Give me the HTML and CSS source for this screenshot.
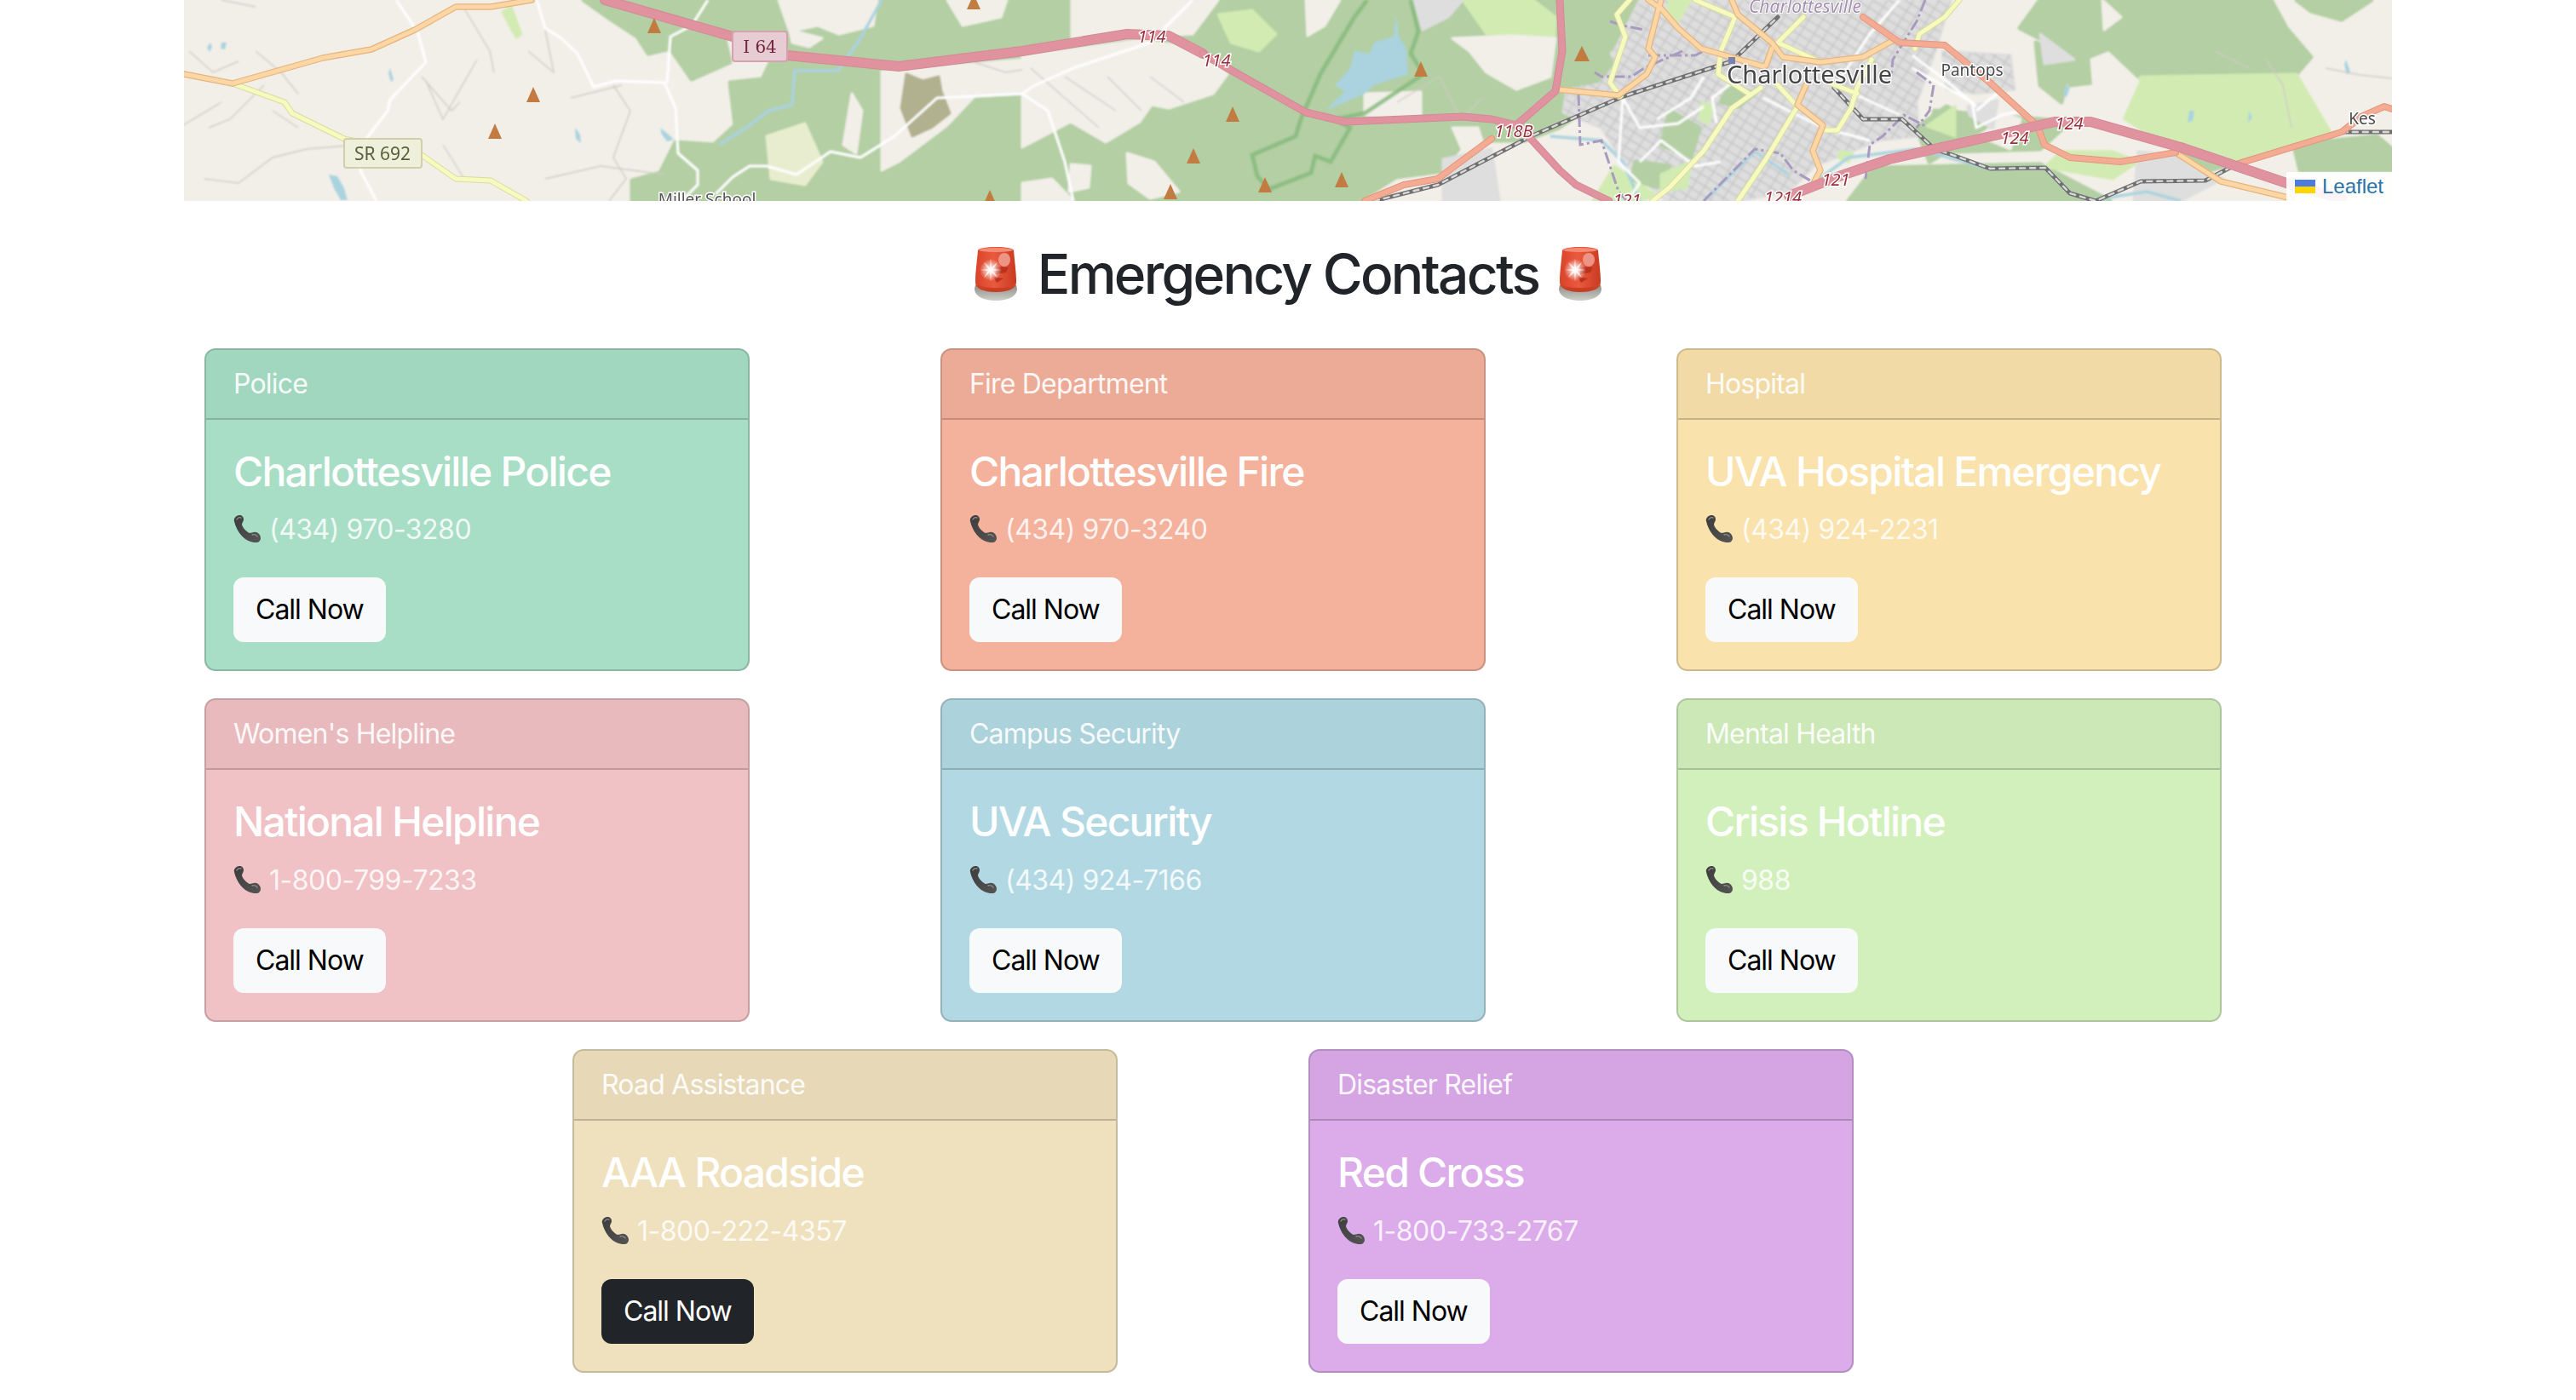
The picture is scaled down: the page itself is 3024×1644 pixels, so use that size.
FILE: index.html
```html
<!DOCTYPE html>
<html lang="en">
<head>
<meta charset="utf-8">
<title>Emergency Contacts</title>
<link rel="stylesheet" href="styles.css">
</head>
<body>
<svg class="defs" aria-hidden="true">
  <defs>
    <linearGradient id="dome" x1="0" x2="1" y1="0" y2="0">
      <stop offset="0" stop-color="#d9432a"/><stop offset=".45" stop-color="#ea5a3e"/><stop offset="1" stop-color="#c93a22"/>
    </linearGradient>
    <linearGradient id="rim" x1="0" x2="0" y1="0" y2="1">
      <stop offset="0" stop-color="#e04e30"/><stop offset="1" stop-color="#c23a20"/>
    </linearGradient>
    <linearGradient id="base" x1="0" x2="0" y1="0" y2="1">
      <stop offset="0" stop-color="#8f8f8a"/><stop offset="1" stop-color="#cfcfc9"/>
    </linearGradient>
    <radialGradient id="flash">
      <stop offset="0" stop-color="#fff"/><stop offset=".35" stop-color="#fff" stop-opacity=".7"/><stop offset="1" stop-color="#fff" stop-opacity="0"/>
    </radialGradient>
    <linearGradient id="handset" x1="0" x2="1" y1="0" y2="1">
      <stop offset="0" stop-color="#3c3c3c"/><stop offset="1" stop-color="#555"/>
    </linearGradient>
    <symbol id="siren" viewBox="0 0 54 64">
      <path class="siren-base" d="M2 49c0 9 11 14 25 14s25-5 25-14l-1-4H3z"/>
      <path class="siren-rim" d="M3 42c0 7 10 11 24 11s24-4 24-11v-5H3z"/>
      <path class="siren-dome" d="M6 4c0-2 9-4 21-4s21 2 21 4c1 12 3 26 3 36 0 5-11 8-24 8S3 45 3 40C3 30 5 16 6 4z"/>
      <ellipse class="siren-top" cx="27" cy="3.5" rx="20" ry="2.5"/>
      <ellipse class="siren-shine" cx="37" cy="15" rx="7" ry="8"/>
      <path class="siren-dark" d="M27 23l15 1-3 6-12 2zM24 35l12 2-8 5z"/>
      <circle class="siren-glow" cx="21" cy="27" r="13"/>
      <path class="siren-star" d="M21 13l1 11 7-6-5 8 9 1-9 1 5 8-7-6-1 11-1-11-7 6 5-8-9-1 9-1-5-8 7 6z"/>
    </symbol>
    <symbol id="phone" viewBox="0 0 32 32">
      <path class="phone-body" d="M1 7C0 4 3 0 7 0c3 0 5 2 5 5 0 2-2 4-2 6 1 4 5 8 9 10 2 0 3-1 5-1 4-1 8 3 8 7 0 2-2 5-4 5-3 0-5 0-8-1C12 29 3 18 1 7z"/>
      <path class="phone-shine" d="M4 5c1-2 3-3 5-2M22 23c2-1 5 0 6 2"/>
    </symbol>
  </defs>
</svg>

<section class="map">
  <svg class="map-canvas" viewBox="216 0 2592 236" preserveAspectRatio="none" role="img" aria-label="Map of Charlottesville">
    <defs>
      <pattern id="streets" width="26" height="20" patternUnits="userSpaceOnUse" patternTransform="rotate(32)">
        <path class="street-fine" d="M0 5H26M0 15H26M7 0V20M19 0V20"/>
      </pattern>
      <filter id="soft" x="0" y="0" width="100%" height="100%"><feGaussianBlur stdDeviation="1"/></filter>
      <filter id="softer" x="0" y="0" width="100%" height="100%"><feGaussianBlur stdDeviation="0.5"/></filter>
      <g id="rail-lines">
        <path d="M1613 236L1688 217 1797 160 1906 113 2033 72 2087 20"/>
        <path d="M2153 103L2187 140 2233 140 2271 175 2295 183 2336 198 2401 197 2430 227 2460 236 2513 213 2589 212 2631 190 2749 155 2808 155"/>
      </g>
      <g id="tert-lines">
        <path d="M273 98L334 120 343 133 404 163 495 182 535 210 576 212 618 236"/>
        <path d="M1913 0L1898 17 1908 43 1890 97 1902 113"/>
        <path d="M1990 0L2037 20 2020 60 2017 87 2053 110"/>
        <path d="M2067 103L2033 127 2000 177 1960 220 1940 236"/>
        <path d="M2117 20L2087 50 2137 73"/>
        <path d="M2087 100L2110 125 2073 187 2040 236"/>
        <path d="M2197 70L2180 103 2173 127 2157 153 2143 153M2147 97L2180 110"/>
        <path d="M2300 0L2283 20 2253 40 2248 57"/>
      </g>
      <g id="sec-lines">
        <path d="M216 87L273 98 379 68 436 58 487 35 535 8 576 8 624 0"/>
        <path d="M1827 105L1900 112 1933 87 1943 67 1935 57 1947 10 1950 0"/>
        <path d="M1935 0L1950 10 1970 33 1997 57 2070 78"/>
        <path d="M2033 0L2040 17 2080 50 2093 67 2137 73 2187 67 2223 47"/>
        <path d="M2080 57L2073 77"/>
        <path d="M2120 100L2110 123 2140 147 2128 177 2137 200 2130 213"/>
        <path d="M2554 179L2607 213 2690 233"/>
      </g>
      <g id="trunk-lines">
        <path d="M1751 163L1705 197 1688 210 1648 217 1602 236"/>
        <path d="M2187 20L2230 50 2283 53 2336 97 2392 148 2400 170 2430 185 2489 190 2554 179"/>
        <path d="M2628 192L2749 155 2772 137 2799 125 2808 128"/>
      </g>
      <g id="mw-wide">
        <path d="M710 0L860 43M924 65L1055 78 1200 60 1323 40 1372 42 1412 63"/>
        <path d="M2100 230L2159 207 2218 187 2412 143 2454 143 2560 173 2690 217 2749 233"/>
      </g>
      <g id="mw-thin">
        <path d="M1412 63L1441 80 1533 132 1579 143 1717 137 1751 140 1780 147 1826 107 1834 60 1831 0"/>
        <path d="M1780 147L1797 163 1831 200 1850 217 1889 236"/>
      </g>
    </defs>
    <rect class="land" x="216" y="0" width="2592" height="236"/>
    <g filter="url(#soft)">
      <g class="forest">
        <path d="M685 0L716 22 748 43 761 63 787 57 812 93 857 73 850 43 870 5 905 15 935 0z"/>
        <path d="M742 236V212L775 203 793 167 838 170 863 147 857 97 895 93 906 70 870 60 855 30 870 5 905 15 935 0H1935L1905 100 1830 150 1790 165 1720 165 1688 205 1640 236z"/>
        <path d="M2395 0H2666L2684 33 2713 67 2696 87 2666 100 2601 113 2513 90 2430 100 2424 60 2371 33z"/>
        <path d="M2696 0H2784L2749 23 2713 13z"/>
        <path d="M2200 197L2395 193 2477 236H2170z"/>
        <path d="M2271 130L2430 143 2395 175 2290 178 2260 165zM2390 50L2430 70 2420 120 2395 100z"/>
        <path d="M2560 176L2600 160 2630 190 2575 205zM2690 160L2740 165 2790 160 2808 175V200L2700 200z"/>
      </g>
      <g class="meadow">
        <path d="M2513 90L2696 87 2737 157 2625 190 2548 173 2483 133z"/>
        <path d="M2400 196L2480 210 2510 190 2480 178 2420 178z"/>
        <path d="M1430 17L1470 12 1498 40 1478 60 1445 50zM1717 0H1800L1826 20 1825 43 1745 40z"/>
        <path d="M590 14L606 44 612 40 600 8z"/>
        <path d="M1895 195L1945 230 1925 236H1870z"/>
      </g>
      <path class="pale" d="M900 160L945 145 965 190 945 217 905 210z"/>
      <g class="clear">
        <path d="M914 0H1030L1025 30 985 40 960 30 927 37z"/>
        <path d="M927 35L965 45 950 55 930 50zM1112 0H1182L1175 20 1130 30z"/>
        <path d="M1035 84L1200 70V110L1144 113 1112 147 1055 190 1035 200z"/>
        <path d="M1000 110L1012 130 1005 180 990 170z"/>
        <path d="M1200 66L1338 47 1395 55 1441 87 1424 110 1372 127 1352 123 1338 143 1298 167 1257 143 1200 173z"/>
        <path d="M1258 0H1430L1400 40 1345 42 1258 50z"/>
        <path d="M1533 0H1573L1555 30 1535 42z"/>
        <path d="M1323 180L1355 190 1384 225 1350 233 1325 215zM1257 193L1280 195 1278 220 1255 225zM1200 215L1235 210 1260 236H1200z"/>
        <path d="M1602 110L1668 108V140L1602 135zM1705 45L1775 42 1826 45 1820 90 1780 105 1745 85 1725 60zM1705 150L1735 150 1751 200 1725 195z"/>
        <path d="M1602 236L1640 212 1694 205 1700 236z"/>
        <path d="M2455 70L2475 62 2510 95 2490 140 2460 130zM2300 150L2340 130 2372 140 2360 175z"/>
        <path d="M2468 0L2490 20 2470 35z"/>
      </g>
      <path class="urban" d="M1660 0H1717L1700 20 1670 35z"/>
      <path class="urban" d="M1850 88L1895 60 1925 0H2290L2272 60 2250 120 2252 160 2205 165 2130 195 2100 225 2040 236H1955L1905 190 1880 150 1835 132 1840 100z"/>
      <path class="urban-streets" d="M1850 88L1895 60 1925 0H2290L2272 60 2250 120 2252 160 2205 165 2130 195 2100 225 2040 236H1955L1905 190 1880 150 1835 132 1840 100z"/>
      <path class="urban" d="M1694 187L1751 175 1760 236H1694zM2510 178L2550 182 2610 210 2560 236H2505z"/>
      <path class="urban" d="M2280 60L2360 65 2365 105 2320 110 2285 105zM2395 40L2435 70 2400 75z"/>
      <path class="urban-streets" d="M2280 60L2360 65 2365 105 2320 110 2285 105z"/>
      <path class="urban" d="M2310 125L2345 118 2340 150 2315 150z"/>
      <g class="forest">
        <path d="M1837 0H1890L1880 45 1892 75 1875 95 1837 102z"/>
        <path d="M1960 130L1995 150 1985 185 1950 170zM1920 190L1960 195 1945 220 1915 210zM2030 100L2060 110 2040 125 2020 120z"/>
        <path d="M2285 125L2330 150 2265 190 2250 150z"/>
      </g>
      <g class="meadow">
        <path d="M1998 120L2012 125 2005 145 1995 140zM1950 205L1985 190 1980 220 1950 225zM2160 177L2175 180 2170 190 2158 185zM2262 148L2295 125 2295 160zM1960 0L1985 0 1970 25 1955 20z"/>
      </g>
      <path class="scrub" d="M1064 87L1083 95 1102 90 1105 107 1115 133 1093 150 1071 160 1058 127z"/>
      <path class="water" d="M1639 18L1636 43 1613 50 1608 63 1590 60 1585 80 1567 100 1579 107 1556 130 1602 110 1613 100 1653 87 1651 57 1642 43z"/>
      <path class="water" d="M386 205l10 2 8 14 4 14-8 0-8-14zM675 150l6 8 1 10-6-5zM775 150l10 8 6 6-8 2-6-8zM260 50l6 0-2 8-5-1zM247 50l-4 6 3 5 3-6zM458 80l4 14-3 2-3-10zM2425 100l5 2-4 12-4-2zM2570 130l6 0-2 12-6 2zM2640 130l4 8-5 6zM2754 70l5 14-4 4-3-12z"/>
      <path class="river" d="M844 170L876 150 902 130 930 123 933 83 984 83 1010 45 1035 0"/>
      <path class="river" d="M1820 160L1880 165 1905 190 1925 236M2000 236L2060 178 2100 205M2100 236L2170 185 2250 175 2336 198 2401 197 2430 227M2450 236L2520 225 2560 236"/>
      <path class="park" d="M1605 0L1590 20 1550 87 1527 140 1521 160 1470 182 1476 207 1490 222 1539 203 1544 183 1562 190 1585 150 1567 140 1602 133 1671 87 1656 63 1665 37 1656 0"/>
      <g class="minor">
        <path d="M222 60L250 85 280 72M260 0L300 8M300 60L330 85 350 110M310 100L270 140 245 150M240 210L280 215 320 185 360 175 420 170M350 150L320 130M495 90L530 130 540 120M500 95L520 140 560 70M545 10L575 60 580 85M620 60L650 85 640 35M670 115L730 100M720 100L740 130 720 185 735 210 715 236M520 170L545 210M640 210L705 195 780 205M210 150L260 120M1135 70L1180 85 1200 82M1210 80L1290 150M1250 90L1310 130M1300 90L1340 130M1350 90L1390 120"/>
        <path d="M1640 120L1690 90 1715 140 1740 115M2660 70L2680 100 2690 150M2730 80L2770 88 2808 92M2600 60L2640 80"/>
      </g>
      <g class="track">
        <path d="M465 0L490 37 500 73 458 117 455 130 430 163 423 200 442 236"/>
        <path d="M630 0L640 33 659 45 678 63 697 102 723 95 780 97 793 127 796 180 819 200 819 217 800 236"/>
        <path d="M831 0L812 30 787 43 783 97"/>
        <path d="M840 228L860 208 880 195 900 195 935 205 975 178 1010 185 1050 160 1100 115 1145 113 1200 110 1215 100 1260 80 1350 50 1400 0"/>
        <path d="M1200 110L1230 130 1250 190 1260 236"/>
        <path d="M2230 0L2195 40 2155 100 2230 135M2070 115L2140 150 2195 165M2000 125L1970 145 1925 150 1905 115 1900 190 1925 215 1910 236M2000 90L1985 115 1945 140M2040 92L2010 115 2015 145M2245 80L2315 120 2320 150 2350 135 2375 130"/>
        <path d="M2245 65L2285 95 2320 125M2350 105L2320 130"/>
        <path d="M1925 190L1950 165 1990 195 2020 190"/>
      </g>
    </g>
    <g filter="url(#softer)">
      <path class="boundary" d="M1890 25L1905 30 1930 35M1935 65L1990 65 2000 60M1975 60L1930 80 1915 90 1880 90 1872 85M1853 110L1855 170 1880 165 1900 225 1910 236M2000 236L2060 175 2090 180 2105 200 2130 215M2190 210L2195 170 2210 160 2235 135 2260 148M2250 85L2270 100 2265 130 2250 150M2260 0L2250 25 2222 70 2220 90"/>
      <use href="#rail-lines" class="rail-case"/>
      <use href="#rail-lines" class="rail-dash"/>
      <use href="#tert-lines" class="yellow-case"/>
      <use href="#tert-lines" class="yellow"/>
      <use href="#sec-lines" class="orange-case"/>
      <use href="#sec-lines" class="orange"/>
      <use href="#trunk-lines" class="salmon-case"/>
      <use href="#trunk-lines" class="salmon"/>
      <use href="#mw-wide" class="mw-case mw-w"/>
      <use href="#mw-wide" class="mw mw-w"/>
      <use href="#mw-thin" class="mw-case"/>
      <use href="#mw-thin" class="mw"/>
      <g class="peaks">
        <path d="M626 102l8 18h-16zM581 145l8 18h-16zM768 21l8 18h-16zM1143-7l8 18h-16zM1162 223l8 18h-16zM1857 54l9 18h-18zM1668 72l8 18h-16zM1447 125l8 18h-16zM1401 174l8 18h-16zM1485 208l8 18h-16zM1575 202l8 18h-16zM1374 216l8 18h-16z"/>
      </g>
      <rect class="station" x="2029" y="67" width="8" height="8"/>
      <rect class="shield-red" x="860" y="37" width="64" height="35" rx="3"/>
      <text class="shield-text" x="892" y="62">I 64</text>
      <rect class="shield-yellow" x="404" y="163" width="91" height="34" rx="3"/>
      <text class="shield-y-text" x="449" y="188">SR 692</text>
      <text class="ref" x="1352" y="50">114</text>
      <text class="ref" x="1428" y="78">114</text>
      <text class="ref" x="1777" y="161">118B</text>
      <text class="ref" x="2429" y="152">124</text>
      <text class="ref" x="2365" y="169">124</text>
      <text class="ref" x="2155" y="218">121</text>
      <text class="ref" x="2093" y="239">1214</text>
      <text class="ref" x="1910" y="242">121</text>
      <text class="place-county" x="2119" y="15">Charlottesville</text>
      <text class="place-city" x="2124" y="98">Charlottesville</text>
      <text class="place-small" x="2315" y="89">Pantops</text>
      <text class="place-small" x="2773" y="146" text-anchor="start">Kes</text>
      <text class="place-tiny" x="830" y="241">Miller School</text>
    </g>
  </svg>
  <div class="attribution">
    <svg class="flag" viewBox="0 0 24 16" aria-hidden="true"><rect class="flag-blue" width="24" height="8"/><rect class="flag-yellow" y="8" width="24" height="8"/></svg>
    <a class="attribution-link">Leaflet</a>
  </div>
</section>

<main class="container">
  <h2 class="page-title">
    <svg class="siren-icon" aria-hidden="true"><use href="#siren"/></svg>
    <span>Emergency Contacts</span>
    <svg class="siren-icon" aria-hidden="true"><use href="#siren"/></svg>
  </h2>

  <div class="row">
    <div class="col"><article class="card card-green">
      <header class="card-header">Police</header>
      <div class="card-body">
        <h4 class="card-title">Charlottesville Police</h4>
        <p class="card-text"><svg class="phone-icon" aria-hidden="true"><use href="#phone"/></svg>(434) 970-3280</p>
        <a class="btn btn-light">Call Now</a>
      </div>
    </article></div>
    <div class="col"><article class="card card-salmon">
      <header class="card-header">Fire Department</header>
      <div class="card-body">
        <h4 class="card-title">Charlottesville Fire</h4>
        <p class="card-text"><svg class="phone-icon" aria-hidden="true"><use href="#phone"/></svg>(434) 970-3240</p>
        <a class="btn btn-light">Call Now</a>
      </div>
    </article></div>
    <div class="col"><article class="card card-yellow">
      <header class="card-header">Hospital</header>
      <div class="card-body">
        <h4 class="card-title">UVA Hospital Emergency</h4>
        <p class="card-text"><svg class="phone-icon" aria-hidden="true"><use href="#phone"/></svg>(434) 924-2231</p>
        <a class="btn btn-light">Call Now</a>
      </div>
    </article></div>
    <div class="col"><article class="card card-pink">
      <header class="card-header">Women's Helpline</header>
      <div class="card-body">
        <h4 class="card-title">National Helpline</h4>
        <p class="card-text"><svg class="phone-icon" aria-hidden="true"><use href="#phone"/></svg>1-800-799-7233</p>
        <a class="btn btn-light">Call Now</a>
      </div>
    </article></div>
    <div class="col"><article class="card card-blue">
      <header class="card-header">Campus Security</header>
      <div class="card-body">
        <h4 class="card-title">UVA Security</h4>
        <p class="card-text"><svg class="phone-icon" aria-hidden="true"><use href="#phone"/></svg>(434) 924-7166</p>
        <a class="btn btn-light">Call Now</a>
      </div>
    </article></div>
    <div class="col"><article class="card card-lime">
      <header class="card-header">Mental Health</header>
      <div class="card-body">
        <h4 class="card-title">Crisis Hotline</h4>
        <p class="card-text"><svg class="phone-icon" aria-hidden="true"><use href="#phone"/></svg>988</p>
        <a class="btn btn-light">Call Now</a>
      </div>
    </article></div>
    <div class="col"><article class="card card-sand">
      <header class="card-header">Road Assistance</header>
      <div class="card-body">
        <h4 class="card-title">AAA Roadside</h4>
        <p class="card-text"><svg class="phone-icon" aria-hidden="true"><use href="#phone"/></svg>1-800-222-4357</p>
        <a class="btn btn-dark">Call Now</a>
      </div>
    </article></div>
    <div class="col"><article class="card card-purple">
      <header class="card-header">Disaster Relief</header>
      <div class="card-body">
        <h4 class="card-title">Red Cross</h4>
        <p class="card-text"><svg class="phone-icon" aria-hidden="true"><use href="#phone"/></svg>1-800-733-2767</p>
        <a class="btn btn-light">Call Now</a>
      </div>
    </article></div>
  </div>
</main>
</body>
</html>
```
FILE: styles.css
```css
* { box-sizing: border-box; }
html { overflow: hidden; }
html, body { margin: 0; background: #fff; }
body {
  font-family: Inter, "Liberation Sans", sans-serif;
  font-size: 32px;
  line-height: 1.5;
  color: #212529;
}
.defs { position: absolute; width: 0; height: 0; }

/* map */
.map { position: relative; width: 2592px; height: 236px; margin: 0 auto; overflow: hidden; }
.map-canvas { display: block; width: 100%; height: 100%; font-family: "Noto Sans", sans-serif; }
.land { fill: #f2efe9; }
.forest path { fill: #b3cfa3; stroke: #b3cfa3; stroke-width: 5; stroke-linejoin: round; }
.meadow path { fill: #d2ebb2; stroke: #d2ebb2; stroke-width: 3; stroke-linejoin: round; }
.pale { fill: #e8edcf; stroke: #e8edcf; stroke-width: 3; stroke-linejoin: round; }
.clear path { fill: #f2efe9; stroke: #f2efe9; stroke-width: 3; stroke-linejoin: round; }
.urban { fill: #dedede; stroke: #dedede; stroke-width: 3; stroke-linejoin: round; }
.urban-streets { fill: url(#streets); }
.street-fine { stroke: #c4c4c4; stroke-width: 1.4; fill: none; }
.scrub { fill: #b1b18f; stroke: #b1b18f; stroke-width: 3; stroke-linejoin: round; }
.water { fill: #aad3df; }
.river { fill: none; stroke: #aad3df; stroke-width: 3.5; }
.park { fill: none; stroke: #86bb7e; stroke-width: 5; opacity: .85; }
.minor path { fill: none; stroke: #cfcbc4; stroke-width: 1.4; }
.track path { fill: none; stroke: #fff; stroke-width: 3; stroke-linejoin: round; }
.boundary { fill: none; stroke: #a99bc0; stroke-width: 3; stroke-dasharray: 14 4 3 4; }
use { fill: none; stroke-linejoin: round; stroke-linecap: round; }
.rail-case { stroke: #6f6f6f; stroke-width: 5; }
.rail-dash { stroke: #d9d9d9; stroke-width: 2.4; stroke-dasharray: 6 6; }
.yellow-case { stroke: #d9dc9f; stroke-width: 7; }
.yellow { stroke: #f7fabf; stroke-width: 5; }
.orange-case { stroke: #e6b57e; stroke-width: 7.5; }
.orange { stroke: #fcd6a4; stroke-width: 5; }
.salmon-case { stroke: #e3967c; stroke-width: 8; }
.salmon { stroke: #f4ab94; stroke-width: 6; }
.mw-case { stroke: #d28a98; stroke-width: 9; }
.mw { stroke: #e1929f; stroke-width: 7; }
.mw-case.mw-w { stroke-width: 12; }
.mw.mw-w { stroke-width: 10; }
.peaks path { fill: #c27c43; }
.station { fill: #7981b0; }
.shield-red { fill: #e8ccd3; stroke: #d3a3af; stroke-width: 2; }
.shield-text { font-size: 20px; fill: #6f2640; text-anchor: middle; font-family: "DejaVu Serif", serif; }
.shield-yellow { fill: #eff0dc; stroke: #cfd0ab; stroke-width: 2; }
.shield-y-text { font-size: 21px; fill: #5a5f3a; text-anchor: middle; }
.ref { font-size: 20px; font-style: italic; fill: #9a2f3c; stroke: #fff; stroke-width: 3; paint-order: stroke; text-anchor: middle; }
.place-county { font-size: 21px; font-style: italic; fill: #a48fb0; stroke: #fff; stroke-width: 2; paint-order: stroke; text-anchor: middle; }
.place-city { font-size: 29px; fill: #454545; stroke: #fff; stroke-width: 3; paint-order: stroke; text-anchor: middle; }
.place-small { font-size: 19px; fill: #4a4a4a; stroke: #fff; stroke-width: 3; paint-order: stroke; text-anchor: middle; }
.place-tiny { font-size: 19px; fill: #555; stroke: #fff; stroke-width: 3; paint-order: stroke; text-anchor: middle; }
.attribution {
  position: absolute; right: 0; bottom: 0;
  display: flex; align-items: center; gap: 8px;
  height: 34px; padding: 0 10px;
  background: rgba(255, 255, 255, .9);
  font-family: "Liberation Sans", sans-serif; font-size: 24px; line-height: 1;
}
.attribution-link { color: #2a73ab; }
.flag { width: 24px; height: 16px; }
.flag-blue { fill: #4c7be1; }
.flag-yellow { fill: #ffd500; }

/* page */
.container { width: 2592px; margin: 0 auto; }
.page-title {
  display: flex; justify-content: center; align-items: center; gap: 22px;
  margin: 48px 0; height: 76.8px;
  font-size: 64px; font-weight: 500; line-height: 1.2; letter-spacing: -2.7px;
}
.siren-icon { width: 54px; height: 64px; flex: none; }
.siren-base { fill: url(#base); }
.siren-rim { fill: url(#rim); }
.siren-dome { fill: url(#dome); }
.siren-top { fill: #f58b72; }
.siren-shine { fill: #ee9484; }
.siren-dark { fill: #b9331f; }
.siren-glow { fill: url(#flash); }
.siren-star { fill: #fff; opacity: .75; }

.row { display: flex; flex-wrap: wrap; justify-content: center; row-gap: 32px; }
.col { width: 864px; padding: 0 24px; }
.card {
  width: 640px;
  border: 2px solid rgba(0, 0, 0, .175);
  border-radius: 13px;
  color: #fff;
  overflow: hidden;
}
.card-header {
  padding: 16px 32px;
  background: rgba(0, 0, 0, .03);
  border-bottom: 2px solid rgba(0, 0, 0, .175);
  color: rgba(255, 255, 255, .92);
  letter-spacing: -.8px;
}
.card-body { padding: 32px; }
.card-title { margin: 0 0 16px; font-size: 48px; font-weight: 450; line-height: 1.2; letter-spacing: -1.75px; }
.card-text { margin: 0 0 32px; color: rgba(255, 255, 255, .85); letter-spacing: -.5px; display: flex; align-items: center; }
.phone-icon { width: 32px; height: 32px; margin-right: 10px; flex: none; position: relative; top: -1px; }
.phone-body { fill: url(#handset); }
.phone-shine { fill: none; stroke: #8a8a8a; stroke-width: 1.4; }
.btn {
  display: block;
  width: fit-content;
  padding: 12px 24px;
  border-radius: 12px;
  border: 2px solid transparent;
  letter-spacing: -1px;
}
.btn-light { background: #f8f9fa; color: #000; }
.btn-dark { background: #212529; color: #fff; }

.card-green { background-color: #a8dec6; }
.card-salmon { background-color: #f4b19b; }
.card-yellow { background-color: #f9e2ab; }
.card-pink { background-color: #f0c1c5; }
.card-blue { background-color: #b2d9e3; }
.card-lime { background-color: #d2f0bc; }
.card-sand { background-color: #efe1bd; }
.card-purple { background-color: #dbabea; }
```
